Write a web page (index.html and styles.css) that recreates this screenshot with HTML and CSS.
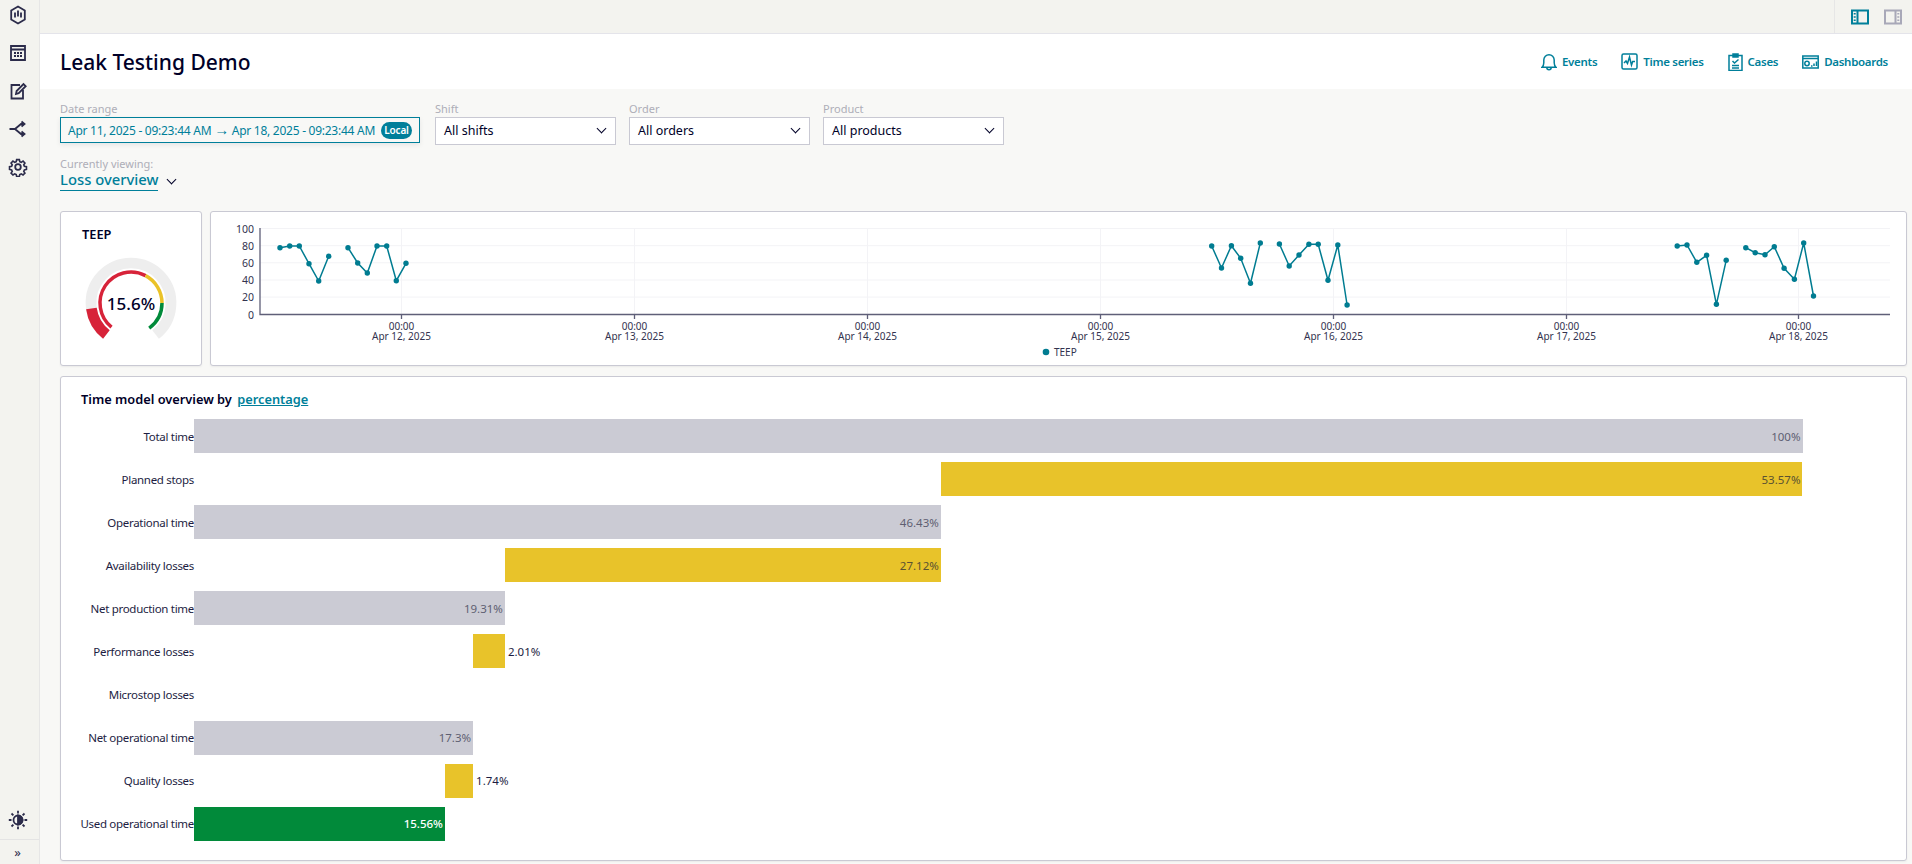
FILE: index.html
```html
<!DOCTYPE html>
<html lang="en">
<head>
  <meta charset="UTF-8" />
  <title>Leak Testing Demo</title>
  <link rel="stylesheet" href="styles.css">
</head>
<body>
  <aside class="sidebar">
    <nav class="side-nav">
      <a class="side-item"><svg width="20" height="20" viewBox="0 0 20 20"><path d="M10 1.500l6.800 4v9l-6.800 4-6.800-4v-9z"/><path d="M7 7.500v5M10 5.500v6M13 7.500v5"/></svg></a>
      <a class="side-item"><svg width="20" height="20" viewBox="0 0 20 20"><path d="M3 3h14v14H3zM3 6.500h14"/><path d="M6 10h2M9 10h2M12 10h2M6 13h2M9 13h2M12 13h2" stroke-width="2"/></svg></a>
      <a class="side-item"><svg width="20" height="20" viewBox="0 0 20 20"><path d="M12 4H3.500v13.500H15V9"/><path d="M8 13l.6-3L15.500 3l2.200 2.200-7 7z"/></svg></a>
      <a class="side-item"><svg width="20" height="20" viewBox="0 0 20 20"><path d="M1.500 10H7l6-5h3M7 10l6 5h3"/><path d="M13.500 2.500L16.500 5l-3 2.500M13.500 12.500L16.500 15l-3 2.500"/></svg></a>
      <a class="side-item"><svg width="20" height="20" viewBox="0 0 20 20"><circle cx="10" cy="10" r="2.800"/><path d="M8.500 1.800h3l.5 2.300 1.600.7 2-1.300 2.100 2.100-1.300 2 .7 1.600 2.300.5v3l-2.300.5-.7 1.600 1.300 2-2.100 2.100-2-1.300-1.600.7-.5 2.300h-3l-.5-2.300-1.600-.7-2 1.300-2.100-2.100 1.300-2-.7-1.600-2.300-.5v-3l2.300-.5.7-1.600-1.300-2 2.100-2.100 2 1.300 1.600-.7z" transform="translate(1 1) scale(.9)"/></svg></a>
    </nav>
    <div class="side-bottom">
      <a class="side-item"><svg width="20" height="20" viewBox="0 0 20 20"><circle cx="10" cy="10" r="4.500"/><path d="M10 5.500a4.500 4.500 0 0 1 0 9z" fill="#2b2b4a"/><path d="M10 .8v2.700M10 16.500v2.700M.8 10h2.700M16.500 10h2.700M3.500 3.500l1.900 1.900M14.600 14.600l1.900 1.900M3.500 16.500l1.900-1.900M14.600 5.400l1.900-1.900" stroke-width="1.800"/></svg></a>
      <div class="side-expand">»</div>
    </div>
  </aside>

  <div class="main">
    <div class="topbar">
      <div class="panel-toggles">
        <svg class="toggle-on" width="18" height="16" viewBox="0 0 18 16"><path d="M1 1.500h16v13H1zM6.500 1.500v13"/><path d="M3.700 4v1.500M3.700 7.200v1.500M3.700 10.500V12" stroke-width="2"/></svg>
        <svg class="toggle-off" width="18" height="16" viewBox="0 0 18 16"><path d="M1 1.500h16v13H1zM11.500 1.500v13"/><path d="M14.300 4v1.500M14.300 7.200v1.500M14.300 10.500V12" stroke-width="2"/></svg>
      </div>
    </div>

    <header class="page-header">
      <h1>Leak Testing Demo</h1>
      <nav class="page-links">
        <a><svg width="16" height="18" viewBox="0 0 16 18"><path d="M1 14.200c1.400-1.200 1.800-2.500 1.800-4.500V7a5.200 5.200 0 0 1 10.400 0v2.700c0 2 .4 3.300 1.800 4.500z"/><path d="M5.800 14.500a2.200 2.200 0 0 0 4.400 0"/></svg>Events</a>
        <a><svg width="17" height="17" viewBox="0 0 17 17"><rect x="1" y="1" width="15" height="15" rx="1.500"/><path d="M3 10l2-2 1.500 2.500L8.500 4l2 8 1.200-3.500H14"/></svg>Time series</a>
        <a><svg width="15" height="18" viewBox="0 0 15 18"><path d="M5 2.500H1v15h13v-15h-4"/><path d="M5 1h5v3H5z" fill="currentColor"/><path d="M4.500 8l2 2 4-3.500M4 12.500h7M4 15h7"/></svg>Cases</a>
        <a><svg width="17" height="14" viewBox="0 0 17 14"><path d="M.8 1h15.400v12H.8zM.8 3.500h15.400"/><circle cx="5" cy="8.500" r="2.200"/><path d="M9 11h1.500M12 11V8.500M14.500 11V6.500" stroke-width="1.500"/></svg>Dashboards</a>
      </nav>
    </header>

    <section class="content">
      <div class="filters">
        <div class="field">
          <label>Date range</label>
          <div class="date-input">
            <span class="date-text">Apr 11, 2025 - 09:23:44 AM <span class="date-arrow">→</span> Apr 18, 2025 - 09:23:44 AM</span>
            <span class="pill">Local</span>
          </div>
        </div>
        <div class="field">
          <label>Shift</label>
          <div class="select">All shifts<i class="chev"></i></div>
        </div>
        <div class="field">
          <label>Order</label>
          <div class="select">All orders<i class="chev"></i></div>
        </div>
        <div class="field">
          <label>Product</label>
          <div class="select">All products<i class="chev"></i></div>
        </div>
      </div>

      <div class="viewing">
        <label>Currently viewing:</label>
        <div class="viewing-row"><span class="viewing-name">Loss overview</span><i class="chev"></i></div>
      </div>

      <div class="kpi-row">
        <div class="card gauge-card">
          <h3>TEEP</h3>
          <div class="gauge">
            <svg width="110" height="110" viewBox="0 0 110 110" fill="none">
              <path d="M30.370 86.520A40 40 0 1 1 79.630 86.520" stroke="#eeeeee" stroke-width="10.700"/>
              <path d="M30.370 86.520A40 40 0 0 1 15.390 60.570" stroke="#d72339" stroke-width="10.700"/>
              <path d="M35.490 79.090A31 31 0 0 1 69.550 27.630" stroke="#d72339" stroke-width="3.500"/>
              <path d="M69.550 27.630A31 31 0 0 1 86 55" stroke="#eac228" stroke-width="3.500"/>
              <path d="M86 55A31 31 0 0 1 73.220 80.080" stroke="#018a3a" stroke-width="3.500"/>
            </svg>
            <span class="gauge-value">15.6%</span>
          </div>
        </div>

        <div class="card chart-card">
          <svg class="teep-chart" width="1695" height="153" viewBox="211 212 1695 153">
            <defs>
              <marker id="pt" markerUnits="userSpaceOnUse" markerWidth="8" markerHeight="8" refX="4" refY="4">
                <circle cx="4" cy="4" r="2.700" fill="#007c91"/>
              </marker>
            </defs>
            <g class="grid">
              <path d="M260 228.500H1890M260 245.700H1890M260 262.800H1890M260 280H1890M260 297.100H1890"/>
              <path d="M401.500 228V314M634.500 228V314M867.500 228V314M1100.500 228V314M1333.500 228V314M1566.500 228V314M1798.500 228V314"/>
            </g>
            <g class="axis">
              <path d="M260 228V314.500H1890"/>
              <path d="M401.500 314V319M634.500 314V319M867.500 314V319M1100.500 314V319M1333.500 314V319M1566.500 314V319M1798.500 314V319"/>
            </g>
            <g class="y-labels">
              <text x="254" y="233">100</text>
              <text x="254" y="250">80</text>
              <text x="254" y="267">60</text>
              <text x="254" y="284">40</text>
              <text x="254" y="301">20</text>
              <text x="254" y="318.500">0</text>
            </g>
            <g class="x-labels">
              <text x="401.500" y="330">00:00</text><text x="401.500" y="340">Apr 12, 2025</text>
              <text x="634.500" y="330">00:00</text><text x="634.500" y="340">Apr 13, 2025</text>
              <text x="867.500" y="330">00:00</text><text x="867.500" y="340">Apr 14, 2025</text>
              <text x="1100.500" y="330">00:00</text><text x="1100.500" y="340">Apr 15, 2025</text>
              <text x="1333.500" y="330">00:00</text><text x="1333.500" y="340">Apr 16, 2025</text>
              <text x="1566.500" y="330">00:00</text><text x="1566.500" y="340">Apr 17, 2025</text>
              <text x="1798.500" y="330">00:00</text><text x="1798.500" y="340">Apr 18, 2025</text>
            </g>
            <g class="series">
              <polyline points="280,247.700 289.700,246 299.300,246 309,263.700 318.700,281 328.700,256.300"/>
              <polyline points="348,247.700 357.700,263 367.300,273 377,246 386.700,246 396.300,280.700 406,263.300"/>
              <polyline points="1211.700,246 1221.500,268 1231.400,245.700 1240.700,258.300 1250.500,283.300 1260.300,243"/>
              <polyline points="1279.400,244 1289.200,266 1299,255 1308.900,244.300 1318.200,244.300 1328,280.300 1337.800,245 1347.100,305"/>
              <polyline points="1677.200,246 1687,245 1696.800,262.300 1706.600,255.300 1716.400,304.300 1726.200,260.300"/>
              <polyline points="1745.800,247.700 1755.200,252.700 1765,254.700 1774.300,246.700 1784.100,268.300 1794.400,279.300 1803.700,243 1813.500,296"/>
            </g>
            <circle cx="1046" cy="352" r="3.300" fill="#007c91"/>
            <text class="legend" x="1054" y="355.500">TEEP</text>
          </svg>
        </div>
      </div>

      <div class="card model-card">
        <h3>Time model overview by <a>percentage</a></h3>
        <div class="bars">
          <div class="bar-row"><span class="bar-label">Total time</span><div class="track"><div class="bar grey" style="margin-left:0;width:100%"><span>100%</span></div></div></div>
          <div class="bar-row"><span class="bar-label">Planned stops</span><div class="track"><div class="bar yellow" style="margin-left:46.43%;width:53.57%"><span>53.57%</span></div></div></div>
          <div class="bar-row"><span class="bar-label">Operational time</span><div class="track"><div class="bar grey" style="margin-left:0;width:46.43%"><span>46.43%</span></div></div></div>
          <div class="bar-row"><span class="bar-label">Availability losses</span><div class="track"><div class="bar yellow" style="margin-left:19.33%;width:27.1%"><span>27.12%</span></div></div></div>
          <div class="bar-row"><span class="bar-label">Net production time</span><div class="track"><div class="bar grey" style="margin-left:0;width:19.33%"><span>19.31%</span></div></div></div>
          <div class="bar-row"><span class="bar-label">Performance losses</span><div class="track"><div class="bar yellow small" style="margin-left:17.35%;width:1.98%"><span>2.01%</span></div></div></div>
          <div class="bar-row"><span class="bar-label">Microstop losses</span><div class="track"></div></div>
          <div class="bar-row"><span class="bar-label">Net operational time</span><div class="track"><div class="bar grey" style="margin-left:0;width:17.35%"><span>17.3%</span></div></div></div>
          <div class="bar-row"><span class="bar-label">Quality losses</span><div class="track"><div class="bar yellow small" style="margin-left:15.6%;width:1.75%"><span>1.74%</span></div></div></div>
          <div class="bar-row"><span class="bar-label">Used operational time</span><div class="track"><div class="bar green" style="margin-left:0;width:15.6%"><span>15.56%</span></div></div></div>
        </div>
      </div>
    </section>
  </div>
</body>
</html>
```

FILE: styles.css
```css
* {
  box-sizing: border-box;
}

body {
  margin: 0;
  height: 864px;
  display: flex;
  overflow: hidden;
  font-family: "Noto Sans", "Open Sans", sans-serif;
  color: #000028;
  background: #f8f8f6;
}

h1, h3 {
  margin: 0;
}

/* sidebar */
.sidebar {
  width: 40px;
  flex: none;
  display: flex;
  flex-direction: column;
  justify-content: space-between;
  background: #f3f3ef;
  border-right: 1px solid #e6e6e6;
}

.side-nav {
  display: flex;
  flex-direction: column;
  gap: 18px;
  padding-top: 5px;
}

.side-item {
  height: 20px;
  display: flex;
  justify-content: center;
  padding-right: 4px;
}

.side-item svg {
  fill: none;
  stroke: #2b2b4a;
  stroke-width: 1.800;
}

.side-expand {
  margin-top: 9px;
  height: 25px;
  border-top: 1px solid #e4e4e4;
  display: flex;
  align-items: center;
  justify-content: center;
  padding-right: 4px;
  font-size: 13px;
  color: #2b2b4a;
}

/* top */
.main {
  flex: 1;
  min-width: 0;
  display: flex;
  flex-direction: column;
}

.topbar {
  height: 34px;
  flex: none;
  display: flex;
  justify-content: flex-end;
  background: #f3f3ef;
  border-bottom: 1px solid #e4e4ea;
}

.panel-toggles {
  width: 78px;
  display: flex;
  align-items: center;
  gap: 15px;
  padding-left: 16px;
  border-left: 1px solid #e6e6e6;
}

.panel-toggles svg {
  fill: none;
  stroke-width: 2;
}

.toggle-on {
  stroke: #007f9a;
}

.toggle-off {
  stroke: #a8a8b8;
}

.page-header {
  height: 55px;
  flex: none;
  display: flex;
  align-items: center;
  justify-content: space-between;
  padding: 0 24px 0 20px;
  background: #ffffff;
}

.page-header h1 {
  font-size: 21px;
  font-weight: 500;
}

.page-links {
  display: flex;
  gap: 24px;
}

.page-links a {
  display: flex;
  align-items: center;
  gap: 5px;
  font-size: 11.500px;
  letter-spacing: -0.3px;
  font-weight: 600;
  color: #007f9a;
}

.page-links svg {
  fill: none;
  stroke: currentColor;
  stroke-width: 1.500;
}

/* filters */
.content {
  flex: 1;
  min-height: 0;
  padding: 13px 5px 0 20px;
}

.filters {
  display: flex;
  gap: 13.500px;
  height: 43px;
}

label {
  display: block;
  height: 15px;
  line-height: 14px;
  font-size: 11px;
  color: #aeaeb8;
}

.date-input {
  width: 360px;
  height: 26px;
  margin-right: 1.500px;
  display: flex;
  align-items: center;
  justify-content: space-between;
  padding: 0 7px;
  border: 1px solid #007f9a;
  font-size: 12px;
  color: #007f9a;
  box-shadow: 0 2px 5px rgba(0, 0, 40, 0.08);
}

.date-text {
  white-space: nowrap;
  letter-spacing: -0.26px;
}

.date-arrow {
  font-size: 15px;
  line-height: 1;
}

.pill {
  width: 31px;
  flex: none;
  height: 17px;
  line-height: 16px;
  text-align: center;
  border-radius: 9px;
  background: #007f9a;
  color: #ffffff;
  font-size: 10px;
  font-weight: 600;
  letter-spacing: -0.2px;
}

.select {
  width: 180.500px;
  height: 28px;
  display: flex;
  align-items: center;
  justify-content: space-between;
  padding: 0 10px 2px 8px;
  background: #ffffff;
  border: 1px solid #c9c9d3;
  font-size: 12.500px;
}

.chev {
  width: 7px;
  height: 7px;
  margin-top: -4px;
  border-right: 1.500px solid #000028;
  border-bottom: 1.500px solid #000028;
  transform: rotate(45deg);
}

.viewing {
  margin-top: 12px;
}

.viewing label {
  height: 14px;
}

.viewing-row {
  display: flex;
  align-items: center;
  gap: 10px;
}

.viewing-name {
  height: 20px;
  line-height: 17px;
  border-bottom: 1px solid #007f9a;
  font-size: 14.800px;
  font-weight: 500;
  color: #007f9a;
}

/* cards */
.card {
  background: #ffffff;
  border: 1px solid #c9c9d3;
  border-radius: 3px;
  box-shadow: 0 1px 2px rgba(0, 0, 40, 0.06);
}

.card h3 {
  font-size: 12.800px;
  font-weight: 600;
}

.kpi-row {
  display: flex;
  gap: 8px;
  height: 155px;
  margin-top: 20px;
}

.gauge-card {
  width: 142px;
  flex: none;
  padding: 13px 0 0 21px;
}

.gauge-card h3 {
  line-height: 18px;
}

.gauge {
  position: relative;
  width: 110px;
  height: 110px;
  margin: 5px 0 0 -6px;
}

.gauge svg {
  display: block;
}

.gauge-value {
  position: absolute;
  inset: 0;
  display: flex;
  align-items: center;
  justify-content: center;
  font-size: 17px;
  font-weight: 500;
}

.chart-card {
  flex: 1;
  min-width: 0;
}

.teep-chart {
  display: block;
}

.grid path {
  fill: none;
  stroke: #f3f3f6;
  stroke-width: 1;
}

.axis path {
  fill: none;
  stroke: #5f5f78;
  stroke-width: 1.300;
}

.teep-chart text {
  font-family: "Noto Sans", sans-serif;
  fill: #33334f;
  font-size: 10px;
}

.y-labels text {
  font-size: 10.500px;
  text-anchor: end;
}

.x-labels text {
  text-anchor: middle;
}

.series polyline {
  fill: none;
  stroke: #007c91;
  stroke-width: 1.500;
  marker-start: url(#pt);
  marker-mid: url(#pt);
  marker-end: url(#pt);
}

/* time model */
.model-card {
  height: 485px;
  margin-top: 10px;
  padding: 13px 0 0 20px;
}

.model-card h3 {
  line-height: 18px;
}

.model-card h3 a {
  color: #007f9a;
  text-decoration: underline;
  margin-left: 2px;
}

.bars {
  display: flex;
  flex-direction: column;
  gap: 9.100px;
  margin-top: 11px;
}

.bar-row {
  display: flex;
  height: 34px;
}

.bar-label {
  width: 113px;
  flex: none;
  display: flex;
  align-items: center;
  justify-content: flex-end;
  white-space: nowrap;
  font-size: 11.500px;
  letter-spacing: -0.3px;
  color: #1d1d42;
}

.track {
  width: 1608.500px;
  flex: none;
}

.bar {
  height: 100%;
  display: flex;
  align-items: center;
  justify-content: flex-end;
  padding-right: 2px;
  white-space: nowrap;
  font-size: 11.500px;
}

.grey {
  background: #cbcbd4;
  color: #5f5f72;
}

.yellow {
  background: #e8c32a;
  color: #5a5232;
}

.green {
  background: #018a3a;
  color: #ffffff;
  font-weight: 500;
}

.small {
  position: relative;
  padding: 0;
}

.small span {
  position: absolute;
  left: calc(100% + 3px);
  color: #1d1d42;
}
```
